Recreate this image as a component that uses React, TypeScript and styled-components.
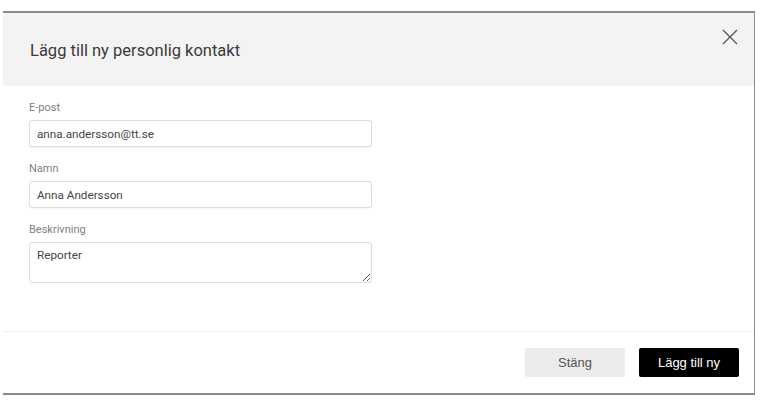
import styled, { createGlobalStyle } from "styled-components";

const GlobalStyle = createGlobalStyle`
  html, body {
    margin: 0;
    padding: 0;
    background: #ffffff;
  }
`;

const Page = styled.div`
  padding: 11px 0 0 3px;
  width: 768px;
  height: 407px;
  box-sizing: border-box;
`;

const Dialog = styled.div`
  width: 752px;
  height: 384px;
  box-sizing: border-box;
  border-top: 2px solid #8a8a8a;
  border-right: 1px solid #8a8a8a;
  border-bottom: 2px solid #8a8a8a;
  background: #ffffff;
  display: flex;
  flex-direction: column;
  font-family: Roboto, "Liberation Sans", Arial, sans-serif;
`;

const Header = styled.div`
  height: 73px;
  flex: none;
  background: #f3f3f3;
  display: flex;
  justify-content: space-between;
  align-items: center;
  padding-left: 27px;
`;

const Title = styled.h1`
  margin: 0;
  font-size: 16.5px;
  font-weight: 400;
  color: #3a3a3a;
  padding-top: 1px;
`;

const CloseButton = styled.button`
  align-self: flex-start;
  margin: 15px 16px 0 0;
  padding: 0;
  border: none;
  background: none;
  width: 17px;
  height: 17px;
  display: flex;
  align-items: center;
  justify-content: center;
  cursor: pointer;
`;

const Body = styled.div`
  flex: 1;
  padding: 15px 0 0 26px;
  display: flex;
  flex-direction: column;
  gap: 15px;
`;

const Field = styled.div`
  display: flex;
  flex-direction: column;
  gap: 5px;
  width: 343px;
`;

const Label = styled.label`
  font-size: 11px;
  line-height: 14px;
  color: #808080;
`;

const Input = styled.input`
  box-sizing: border-box;
  width: 100%;
  height: 27px;
  border: 1px solid #dcdcdc;
  border-radius: 3px;
  box-shadow: 0 1px 1px rgba(0, 0, 0, 0.04);
  padding: 0 7px;
  font-family: Roboto, "Liberation Sans", Arial, sans-serif;
  font-size: 11.7px;
  color: #444444;
  outline: none;
`;

const TextArea = styled.textarea`
  box-sizing: border-box;
  width: 100%;
  height: 41px;
  border: 1px solid #dcdcdc;
  border-radius: 3px;
  padding: 5px 7px;
  font-family: Roboto, "Liberation Sans", Arial, sans-serif;
  font-size: 11.7px;
  color: #444444;
  outline: none;
  resize: vertical;
  display: block;
`;

const Footer = styled.div`
  flex: none;
  height: 61px;
  border-top: 1px solid #f0f0f0;
  display: flex;
  justify-content: flex-end;
  align-items: center;
  gap: 14px;
  padding-right: 15px;
`;

const Button = styled.button<{ $primary?: boolean }>`
  width: 100px;
  height: 29px;
  border: none;
  border-radius: 2px;
  font-family: "Liberation Sans", Arial, sans-serif;
  font-size: 13px;
  background: ${(p) => (p.$primary ? "#000000" : "#ececec")};
  color: ${(p) => (p.$primary ? "#ffffff" : "#555555")};
  cursor: pointer;
`;

export default function App() {
  return (
    <>
      <GlobalStyle />
      <Page>
        <Dialog>
          <Header>
            <Title>Lägg till ny personlig kontakt</Title>
            <CloseButton aria-label="Stäng">
              <svg width="16" height="16" viewBox="0 0 16 16">
                <path
                  d="M1 1 L15 15 M15 1 L1 15"
                  stroke="#555"
                  strokeWidth="1.3"
                  fill="none"
                />
              </svg>
            </CloseButton>
          </Header>
          <Body>
            <Field>
              <Label htmlFor="email">E-post</Label>
              <Input id="email" defaultValue="anna.andersson@tt.se" />
            </Field>
            <Field>
              <Label htmlFor="name">Namn</Label>
              <Input id="name" defaultValue="Anna Andersson" />
            </Field>
            <Field>
              <Label htmlFor="desc">Beskrivning</Label>
              <TextArea id="desc" defaultValue="Reporter" />
            </Field>
          </Body>
          <Footer>
            <Button>Stäng</Button>
            <Button $primary>Lägg till ny</Button>
          </Footer>
        </Dialog>
      </Page>
    </>
  );
}
